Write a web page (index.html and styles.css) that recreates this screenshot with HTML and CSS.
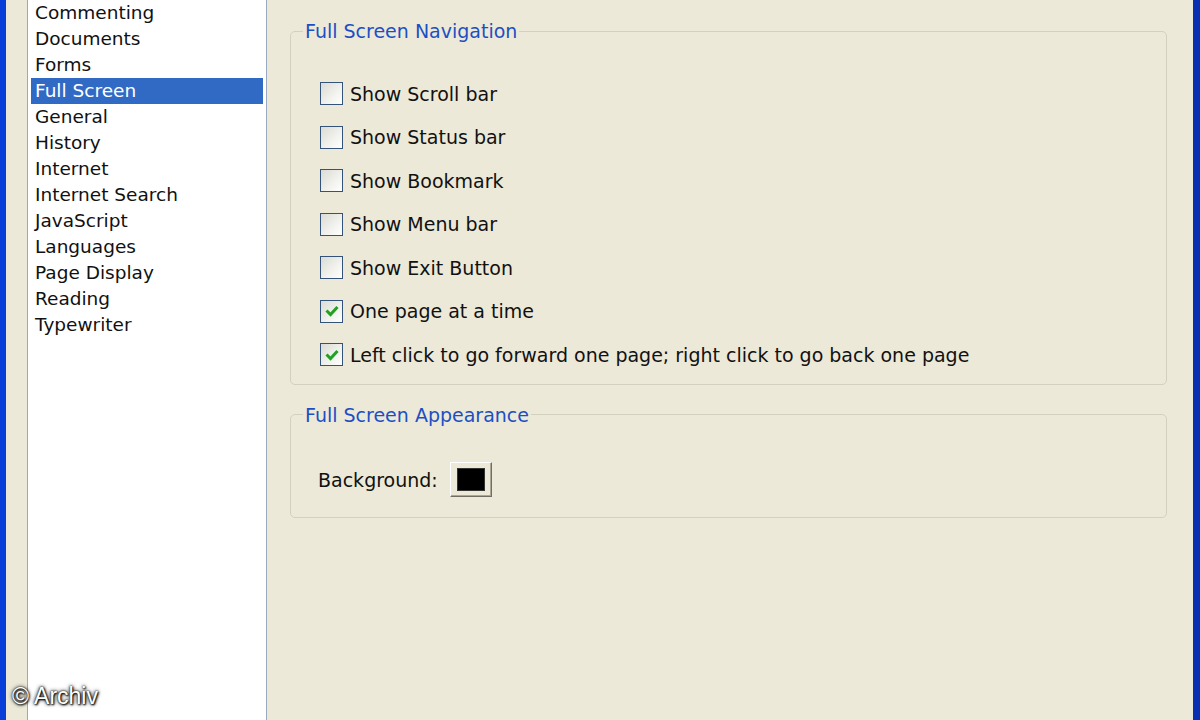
FILE: index.html
```html
<!DOCTYPE html>
<html>
<head>
<meta charset="utf-8">
<link rel="stylesheet" href="styles.css">
</head>
<body>
<div class="window">
  <div class="edge-left"></div>
  <div class="sidebar">
    <ul class="listbox">
      <li>Commenting</li>
      <li>Documents</li>
      <li>Forms</li>
      <li class="selected">Full Screen</li>
      <li>General</li>
      <li>History</li>
      <li>Internet</li>
      <li>Internet Search</li>
      <li>JavaScript</li>
      <li>Languages</li>
      <li>Page Display</li>
      <li>Reading</li>
      <li>Typewriter</li>
    </ul>
  </div>
  <div class="panel">
    <fieldset class="group nav">
      <legend>Full Screen Navigation</legend>
      <div class="body">
        <div class="row"><span class="check"></span><span>Show Scroll bar</span></div>
        <div class="row"><span class="check"></span><span>Show Status bar</span></div>
        <div class="row"><span class="check"></span><span>Show Bookmark</span></div>
        <div class="row"><span class="check"></span><span>Show Menu bar</span></div>
        <div class="row"><span class="check"></span><span>Show Exit Button</span></div>
        <div class="row"><span class="check on"><svg viewBox="0 0 20 20" width="20" height="20"><path d="M4.5 9.5 L8.5 13.5 L15.5 6" fill="none" stroke="#21a121" stroke-width="3"/></svg></span><span>One page at a time</span></div>
        <div class="row"><span class="check on"><svg viewBox="0 0 20 20" width="20" height="20"><path d="M4.5 9.5 L8.5 13.5 L15.5 6" fill="none" stroke="#21a121" stroke-width="3"/></svg></span><span>Left click to go forward one page; right click to go back one page</span></div>
      </div>
    </fieldset>
    <fieldset class="group appear">
      <legend>Full Screen Appearance</legend>
      <div class="body">
        <div class="bgrow"><span>Background:</span><span class="colorbtn"><span class="swatch"></span></span></div>
      </div>
    </fieldset>
  </div>
  <div class="edge-right"></div>
  <div class="watermark">© Archiv</div>
</div>
</body>
</html>
```
FILE: styles.css
```css
html, body {
  margin: 0;
  padding: 0;
  width: 1200px;
  height: 720px;
  overflow: hidden;
  background: #ece9d8;
  font-family: "DejaVu Sans", sans-serif;
  font-size: 18.5px;
  color: #111;
}
.window {
  position: relative;
  display: flex;
  height: 720px;
}
.edge-left {
  width: 6px;
  background: #0a3ed8;
  flex: none;
}
.edge-right {
  width: 7px;
  background: #0a2fb0;
  flex: none;
}
.sidebar {
  width: 261px;
  flex: none;
  padding-left: 21px;
  box-sizing: border-box;
  background: #ece9d8;
}
.listbox {
  list-style: none;
  margin: 0;
  padding: 0 3px;
  height: 720px;
  box-sizing: border-box;
  background: #fff;
  border-left: 1px solid #9aa9c0;
  border-right: 1px solid #9aa9c0;
}
.listbox li {
  height: 26px;
  line-height: 26px;
  padding-left: 4px;
}
.listbox li.selected {
  background: #316ac5;
  color: #fff;
}
.panel {
  flex: 1;
  padding: 19px 26px 0 23px;
  font-size: 19px;
}
.group {
  margin: 0;
  border: 1px solid #d3d0c0;
  border-radius: 5px;
  padding: 0;
}
.group legend {
  color: #1d4fc4;
  line-height: 24px;
  padding: 0 2px;
  margin-left: 12px;
}
.nav .body {
  padding: 29px 0 7px 29px;
}
.row {
  height: 43.5px;
  display: flex;
  align-items: center;
  gap: 7px;
}
.check {
  width: 21px;
  height: 21px;
  border: 1px solid #34537a;
  background: linear-gradient(135deg, #dcdcd6 0%, #f2f2ee 60%, #fff 100%);
  display: flex;
  align-items: center;
  justify-content: center;
  flex: none;
}
.check svg {
  width: 20px;
  height: 20px;
}
.appear {
  margin-top: 18px;
}
.appear .body {
  padding: 35px 0 19px 27px;
}
.bgrow {
  display: flex;
  align-items: center;
  gap: 12px;
  height: 36px;
}
.colorbtn {
  width: 42px;
  height: 35px;
  box-sizing: border-box;
  background: #ece9d8;
  border: 1px solid;
  border-color: #fff #716f64 #716f64 #fff;
  box-shadow: inset -1px -1px 0 #aca899;
  display: flex;
  align-items: center;
  justify-content: center;
}
.swatch {
  width: 26px;
  height: 21px;
  background: #000;
  border: 1px solid #333;
}
.watermark {
  position: absolute;
  left: 12px;
  top: 683px;
  font-family: "Liberation Sans", Arial, sans-serif;
  font-size: 23px;
  color: #fff;
  text-shadow: 0 0 4px #000, 0 0 2px #000, 1px 1px 2px #000;
}
```
